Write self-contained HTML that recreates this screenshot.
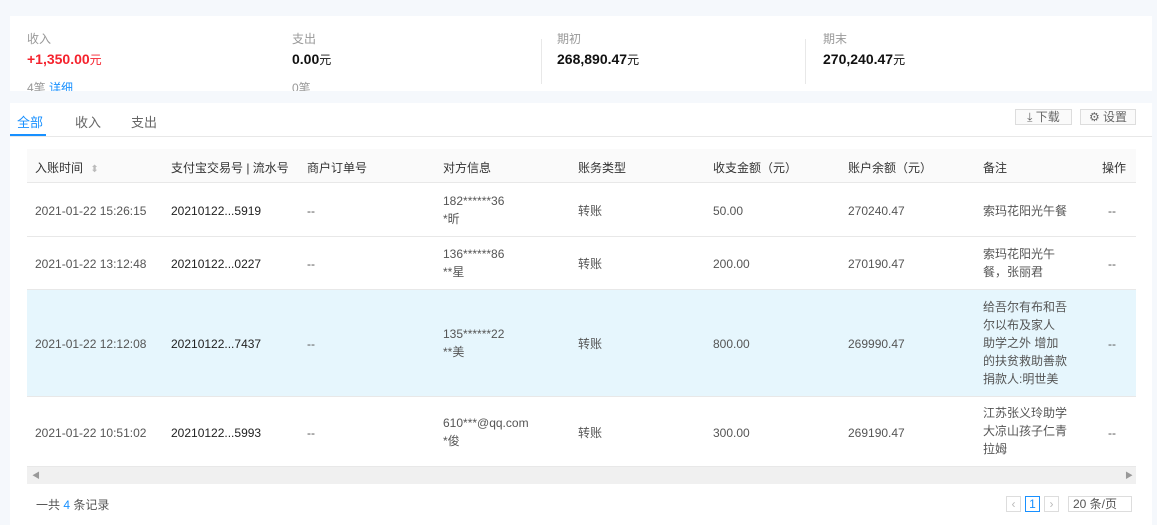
<!DOCTYPE html>
<html><head><meta charset="utf-8"><style>
*{margin:0;padding:0;box-sizing:border-box}
body{width:1157px;height:525px;background:#f5f8fc;font-family:"Liberation Sans","Noto Sans CJK SC",sans-serif;font-size:12px;color:#333;position:relative;overflow:hidden}
.card{position:absolute;background:#fff}
.a{position:absolute;white-space:nowrap}
.lbl{color:#999;font-size:12px}
.val{font-size:14px;color:#111;font-weight:bold}
.val span{font-weight:normal}
.sep{position:absolute;width:1px;background:#e8e8e8}
.th{position:absolute;top:149px;left:27px;width:1109px;height:34px;background:#fafafa;border-bottom:1px solid #e8e8e8}
.row{position:absolute;left:27px;width:1109px;border-bottom:1px solid #e8e8e8}
.c{position:absolute;color:#555;line-height:18px}
.btn{position:absolute;border:1px solid #ddd;background:#fafafa;height:16px;font-size:12px;color:#666;line-height:14px;text-align:center}
</style></head><body>
<div class="card" style="left:10px;top:16px;width:1142px;height:75px;overflow:hidden">
  <div class="a lbl" style="left:17px;top:14px">收入</div>
  <div class="a val" style="left:17px;top:35px;color:#f5222d">+1,350.00<span style="font-size:12px">元</span></div>
  <div class="a lbl" style="left:17px;top:63px">4笔 <span style="color:#1890ff">详细</span></div>
  <div class="a lbl" style="left:282px;top:14px">支出</div>
  <div class="a val" style="left:282px;top:35px">0.00<span style="font-size:12px">元</span></div>
  <div class="a lbl" style="left:282px;top:63px">0笔</div>
  <div class="sep" style="left:531px;top:23px;height:45px"></div>
  <div class="a lbl" style="left:547px;top:14px">期初</div>
  <div class="a val" style="left:547px;top:35px">268,890.47<span style="font-size:12px">元</span></div>
  <div class="sep" style="left:795px;top:23px;height:45px"></div>
  <div class="a lbl" style="left:813px;top:14px">期末</div>
  <div class="a val" style="left:813px;top:35px">270,240.47<span style="font-size:12px">元</span></div>
</div>
<div class="card" style="left:10px;top:103px;width:1142px;height:422px"></div>
<div class="a" style="left:10px;top:136px;width:1142px;height:1px;background:#e8e8e8"></div>
<div class="a" style="left:17px;top:112px;font-size:13px;color:#1890ff">全部</div>
<div class="a" style="left:10px;top:134px;width:36px;height:2px;background:#1890ff"></div>
<div class="a" style="left:75px;top:112px;font-size:13px;color:#666">收入</div>
<div class="a" style="left:131px;top:112px;font-size:13px;color:#666">支出</div>
<div class="btn" style="left:1015px;top:109px;width:57px">⤓ 下载</div>
<div class="btn" style="left:1080px;top:109px;width:56px">⚙ 设置</div>
<div class="th"></div>
<div class="a" style="left:35px;top:159px;color:#333">入账时间 <span style="color:#bbb;font-size:10px;margin-left:4px">⬍</span></div>
<div class="a" style="left:171px;top:159px">支付宝交易号 | 流水号</div>
<div class="a" style="left:307px;top:159px">商户订单号</div>
<div class="a" style="left:443px;top:159px">对方信息</div>
<div class="a" style="left:578px;top:159px">账务类型</div>
<div class="a" style="left:713px;top:159px">收支金额（元）</div>
<div class="a" style="left:848px;top:159px">账户余额（元）</div>
<div class="a" style="left:983px;top:159px">备注</div>
<div class="a" style="left:1102px;top:159px">操作</div>

<div class="row" style="top:183px;height:54px"></div>
<div class="row" style="top:237px;height:53px"></div>
<div class="row" style="top:290px;height:107px;background:#e6f6fd"></div>
<div class="row" style="top:397px;height:70px"></div>

<div class="c" style="left:35px;top:202px">2021-01-22 15:26:15</div>
<div class="c" style="left:171px;top:202px;color:#222">20210122...5919</div>
<div class="c" style="left:307px;top:202px">--</div>
<div class="c" style="left:443px;top:192px">182******36<br>*昕</div>
<div class="c" style="left:578px;top:202px">转账</div>
<div class="c" style="left:713px;top:202px">50.00</div>
<div class="c" style="left:848px;top:202px">270240.47</div>
<div class="c" style="left:983px;top:202px">索玛花阳光午餐</div>
<div class="c" style="left:1108px;top:202px">--</div>

<div class="c" style="left:35px;top:255px">2021-01-22 13:12:48</div>
<div class="c" style="left:171px;top:255px;color:#222">20210122...0227</div>
<div class="c" style="left:307px;top:255px">--</div>
<div class="c" style="left:443px;top:245px">136******86<br>**星</div>
<div class="c" style="left:578px;top:255px">转账</div>
<div class="c" style="left:713px;top:255px">200.00</div>
<div class="c" style="left:848px;top:255px">270190.47</div>
<div class="c" style="left:983px;top:245px">索玛花阳光午<br>餐，张丽君</div>
<div class="c" style="left:1108px;top:255px">--</div>

<div class="c" style="left:35px;top:335px">2021-01-22 12:12:08</div>
<div class="c" style="left:171px;top:335px;color:#222">20210122...7437</div>
<div class="c" style="left:307px;top:335px">--</div>
<div class="c" style="left:443px;top:325px">135******22<br>**美</div>
<div class="c" style="left:578px;top:335px">转账</div>
<div class="c" style="left:713px;top:335px">800.00</div>
<div class="c" style="left:848px;top:335px">269990.47</div>
<div class="c" style="left:983px;top:298px">给吾尔有布和吾<br>尔以布及家人<br>助学之外 增加<br>的扶贫救助善款<br>捐款人:明世美</div>
<div class="c" style="left:1108px;top:335px">--</div>

<div class="c" style="left:35px;top:424px">2021-01-22 10:51:02</div>
<div class="c" style="left:171px;top:424px;color:#222">20210122...5993</div>
<div class="c" style="left:307px;top:424px">--</div>
<div class="c" style="left:443px;top:414px">610***@qq.com<br>*俊</div>
<div class="c" style="left:578px;top:424px">转账</div>
<div class="c" style="left:713px;top:424px">300.00</div>
<div class="c" style="left:848px;top:424px">269190.47</div>
<div class="c" style="left:983px;top:404px">江苏张义玲助学<br>大凉山孩子仁青<br>拉姆</div>
<div class="c" style="left:1108px;top:424px">--</div>

<div class="a" style="left:27px;top:467px;width:1109px;height:17px;background:#f0f0f0"></div>
<div class="a" style="left:32px;top:470px;font-size:8px;color:#999">◀</div>
<div class="a" style="left:1125px;top:470px;font-size:8px;color:#999">▶</div>

<div class="a" style="left:36px;top:496px;color:#555">一共 <span style="color:#1890ff">4</span> 条记录</div>
<div class="a" style="left:1006px;top:496px;width:15px;height:16px;border:1px solid #ddd;color:#bbb;text-align:center;line-height:14px">‹</div>
<div class="a" style="left:1025px;top:496px;width:15px;height:16px;border:1px solid #1890ff;color:#1890ff;text-align:center;line-height:14px">1</div>
<div class="a" style="left:1044px;top:496px;width:15px;height:16px;border:1px solid #ddd;color:#bbb;text-align:center;line-height:14px">›</div>
<div class="a" style="left:1068px;top:496px;width:64px;height:16px;border:1px solid #ddd;color:#555;line-height:14px;padding-left:4px">20 条/页</div>
</body></html>
